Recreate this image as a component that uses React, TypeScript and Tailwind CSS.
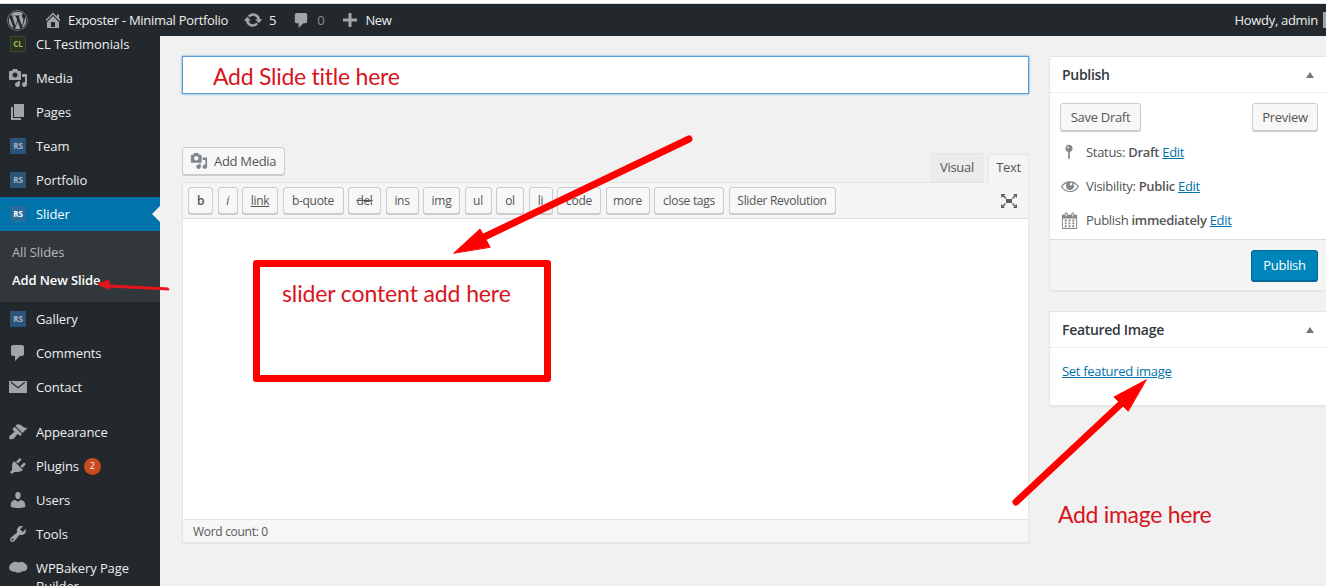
import { ReactNode } from "react";
import { FaWordpress } from "react-icons/fa";

function Dash({ d, className }: { d: string; className?: string }) {
  return (
    <svg viewBox="0 0 20 20" fill="currentColor" className={className ?? "h-5 w-5"}>
      <path d={d} />
    </svg>
  );
}

const icons = {
  media:
    "M13 11V4c0-.55-.45-1-1-1h-1.67L9 1H5L3.67 3H2c-.55 0-1 .45-1 1v7c0 .55.45 1 1 1h10c.55 0 1-.45 1-1zM7 4.5c1.38 0 2.5 1.12 2.5 2.5S8.38 9.5 7 9.5 4.5 8.38 4.5 7 5.62 4.5 7 4.5zM14 6h5v10.5c0 1.38-1.12 2.5-2.5 2.5S14 17.88 14 16.5s1.12-2.5 2.5-2.5c.17 0 .34.02.5.05V9h-3V6zm-4 8.05V13h2v3.5c0 1.38-1.12 2.5-2.5 2.5S7 17.88 7 16.5 8.12 14 9.5 14c.17 0 .34.02.5.05z",
  pages: "M6 15V2h10v13H6zm-1 1h8v2H3V5h2v11z",
  comment: "M5 2h9c1.1 0 2 .9 2 2v7c0 1.1-.9 2-2 2h-2l-5 5v-5H5c-1.1 0-2-.9-2-2V4c0-1.1.9-2 2-2z",
  mail: "M1 4h18v12H1V4zm1.5 1.5L10 11.5l7.5-6-.9-.7L10 10 3.4 4.8l-.9.7z",
  appearance:
    "M14.48 11.06L7.41 3.99l1.5-1.5c.5-.56 2.3-.47 3.51.32 1.21.8 1.43 1.28 2.91 2.1 1.18.64 2.45 1.26 4.45.85zm-.71.71L6.7 4.7 4.93 6.47c-.39.39-.39 1.02 0 1.41l1.06 1.06c.39.39.39 1.03 0 1.42-.6.6-1.43 1.11-2.21 1.69-.35.26-.7.53-1.01.84C1.43 13.23.78 15.08 1.4 17.04c1.95.62 3.8-.03 5.15-1.37.31-.31.58-.66.84-1.01.58-.78 1.09-1.61 1.69-2.21.39-.39 1.02-.39 1.41 0l1.06 1.06c.39.39 1.02.39 1.41 0z",
  plugins:
    "M13.11 4.36L9.87 7.6 8 5.73l3.24-3.24c.35-.34 1.05-.2 1.56.32.52.51.66 1.21.31 1.55zm-8 1.77l.91-1.12 9.01 9.01-1.19.84c-.71.71-2.63 1.16-3.82 1.16H6.14L4.9 17.26c-.59.59-1.54.59-2.12 0-.59-.58-.59-1.53 0-2.12l1.24-1.24v-3.88c0-1.13.4-3.19 1.09-3.89zm7.26 3.97l3.24-3.24c.34-.35 1.04-.21 1.55.31.52.51.66 1.21.31 1.55l-3.24 3.25z",
  users:
    "M10 9.25c-2.27 0-2.73-3.44-2.73-3.44C7 4.02 7.82 2 9.97 2c2.16 0 2.98 2.02 2.71 3.81 0 0-.41 3.44-2.68 3.44zm0 2.57L12.72 10c2.39 0 4.52 2.33 4.52 4.53v2.49s-3.65 1.13-7.24 1.13c-3.65 0-7.24-1.13-7.24-1.13v-2.49c0-2.25 1.94-4.48 4.47-4.48z",
  tools:
    "M16.68 9.77c-1.34 1.34-3.3 1.67-4.95.99l-5.41 6.52c-.99.99-2.59.99-3.58 0s-.99-2.59 0-3.57l6.52-5.42c-.68-1.65-.35-3.61.99-4.95 1.28-1.28 3.12-1.62 4.72-1.06l-2.89 2.89 2.82 2.82 2.86-2.87c.53 1.58.18 3.39-1.08 4.65zM3.81 16.21c.4.39 1.04.39 1.43 0 .4-.4.4-1.04 0-1.43-.39-.4-1.03-.4-1.43 0-.39.39-.39 1.03 0 1.43z",
  cloud:
    "M5 3.5c1.5-1.2 4-1 5.5 0 2-.8 5-.6 6.5 1 2 1 3 3.5 2 5.5-1 1.8-3 2.5-5 2.2-.7 1-2 1.6-3 1.3-1.8.8-2.5.2-3-.8-2 .2-5-.2-6.3-2C.5 8.5 1.5 5 5 3.5z",
  home: "M16 8.5l1.53 1.53-1.06 1.06L10 4.62l-6.47 6.47-1.06-1.06L10 2.5l4 4v-2h2v4zm-6-2.46l6 5.99V18H4v-5.97zM12 17v-5H8v5h4z",
  update:
    "M10.2 3.28c3.53 0 6.43 2.61 6.92 6h2.08l-3.5 4-3.5-4h2.32c-.45-1.97-2.21-3.45-4.32-3.45-1.45 0-2.73.71-3.54 1.78L4.95 5.66C6.23 4.2 8.11 3.28 10.2 3.28zm-.4 13.44c-3.52 0-6.43-2.61-6.92-6H.8l3.5-4c1.17 1.33 2.33 2.67 3.5 4H5.48c.45 1.97 2.21 3.45 4.32 3.45 1.45 0 2.73-.71 3.54-1.78l1.71 1.95c-1.28 1.46-3.15 2.38-5.25 2.38z",
  plus: "M17 8.5v3h-5.5V17h-3v-5.5H3v-3h5.5V3h3v5.5H17z",
  pin: "M14 6c0 1.86-1.28 3.41-3 3.86V16c0 1-2 2-2 2V9.86c-1.72-.45-3-2-3-3.86 0-2.21 1.79-4 4-4s4 1.79 4 4zM8 5c0 .55.45 1 1 1s1-.45 1-1-.45-1-1-1-1 .45-1 1z",
  eye: "M18.3 9.5C15 4.9 8.5 3.8 3.9 7.2c-1.2.9-2.2 2.1-3 3.4.2.4.5.8.8 1.2 3.3 4.6 9.6 5.6 14.2 2.4.9-.7 1.7-1.4 2.4-2.4.3-.4.5-.8.8-1.2-.3-.4-.5-.8-.8-1.1zm-8.2-2.3c.5-.5 1.3-.5 1.8 0s.5 1.3 0 1.8-1.3.5-1.8 0-.5-1.3 0-1.8zm-.1 7.7c-3.1 0-6-1.6-7.7-4.2C3.5 9 5.1 7.8 7 7.2c-.7.8-1 1.7-1 2.7 0 2.2 1.7 4.1 4 4.1 2.2 0 4.1-1.7 4.1-4v-.1c0-1-.4-2-1.1-2.7 1.9.6 3.5 1.8 4.7 3.5-1.7 2.6-4.6 4.2-7.7 4.2z",
  calendar:
    "M15 4h3v15H2V4h3V3c0-.41.15-.76.44-1.06.29-.29.65-.44 1.06-.44s.77.15 1.06.44c.29.3.44.65.44 1.06v1h4V3c0-.41.15-.76.44-1.06.29-.29.65-.44 1.06-.44s.77.15 1.06.44c.29.3.44.65.44 1.06v1zM6 3v2.5c0 .14.05.26.15.36.09.09.21.14.35.14s.26-.05.35-.14c.1-.1.15-.22.15-.36V3c0-.14-.05-.26-.15-.35-.09-.1-.21-.15-.35-.15s-.26.05-.35.15c-.1.09-.15.21-.15.35zm7 0v2.5c0 .14.05.26.14.36.1.09.22.14.36.14s.26-.05.36-.14c.09-.1.14-.22.14-.36V3c0-.14-.05-.26-.14-.35-.1-.1-.22-.15-.36-.15s-.26.05-.36.15c-.09.09-.14.21-.14.35zm4 15V8H3v10h14zM7 9v2H5V9h2zm2 0h2v2H9V9zm4 2V9h2v2h-2zm-6 1v2H5v-2h2zm2 0h2v2H9v-2zm4 2v-2h2v2h-2zm-6 1v2H5v-2h2zm4 2H9v-2h2v2zm4 0h-2v-2h2v2z",
  expand:
    "M7 8h6v4H7zM2 3h4.5L5 4.5 7.5 7 6.5 8 4 5.5 2.5 7 2 3zm16 0v4l-1.5-1.5L14 8l-1-1 2.5-2.5L14 3h4zM2 17v-4l1.5 1.5L6 12l1 1-2.5 2.5L6 17H2zm16 0h-4l1.5-1.5L13 13l1-1 2.5 2.5L18 13v4z",
};

function Badge({ text, className }: { text: string; className: string }) {
  return (
    <span className={`flex h-4 w-4 items-center justify-center text-[8px] font-bold leading-none ${className}`}>{text}</span>
  );
}

function MenuItem({ icon, label, extra, active }: { icon: ReactNode; label: string; extra?: ReactNode; active?: boolean }) {
  return (
    <div className={`relative flex h-[34px] items-center ${active ? "bg-[#0073aa] text-white" : "text-[#eeeeee]"}`}>
      <span className={`flex w-9 shrink-0 items-center justify-center ${active ? "text-white" : "text-[#a0a5aa]"}`}>{icon}</span>
      <span className="pt-px">{label}</span>
      {extra}
      {active && <span className="absolute right-0 top-[9px] h-0 w-0 border-y-8 border-r-8 border-y-transparent border-r-[#f1f1f1]" />}
    </div>
  );
}

function Rs({ active }: { active?: boolean }) {
  return <Badge text="RS" className={active ? "bg-[#2a6c9e] text-white" : "bg-[#2c5378] text-[#a8b4c0]"} />;
}

function Sidebar() {
  return (
    <aside className="h-[550px] w-40 shrink-0 overflow-hidden bg-[#23282d] text-[13px] tracking-[-0.1px]">
      <div className="-mt-[9px]">
        <MenuItem icon={<Badge text="CL" className="border border-[#3a4a2a] bg-[#2a3226] text-[#9dbb4f]" />} label="CL Testimonials" />
        <MenuItem icon={<Dash d={icons.media} />} label="Media" />
        <MenuItem icon={<Dash d={icons.pages} />} label="Pages" />
        <MenuItem icon={<Rs />} label="Team" />
        <MenuItem icon={<Rs />} label="Portfolio" />
        <MenuItem icon={<Rs active />} label="Slider" active />
        <div className="flex h-[71px] flex-col gap-2 bg-[#32373c] pl-3 pt-[11px] leading-5">
          <span className="text-[#b4b9be]">All Slides</span>
          <span className="font-semibold text-white">Add New Slide</span>
        </div>
        <MenuItem icon={<Rs />} label="Gallery" />
        <MenuItem icon={<Dash d={icons.comment} />} label="Comments" />
        <MenuItem icon={<Dash d={icons.mail} />} label="Contact" />
        <div className="h-[11px]" />
        <MenuItem icon={<Dash d={icons.appearance} />} label="Appearance" />
        <MenuItem
          icon={<Dash d={icons.plugins} />}
          label="Plugins"
          extra={
            <span className="ml-[5px] flex h-[17px] w-[17px] items-center justify-center rounded-full bg-[#ca4a1f] text-[9px] text-white">2</span>
          }
        />
        <MenuItem icon={<Dash d={icons.users} />} label="Users" />
        <MenuItem icon={<Dash d={icons.tools} />} label="Tools" />
        <div className="flex pt-2 leading-[18px] text-[#eeeeee]">
          <span className="flex w-9 shrink-0 justify-center text-[#a0a5aa]">
            <Dash d={icons.cloud} />
          </span>
          <span className="w-[110px]">WPBakery Page Builder</span>
        </div>
      </div>
    </aside>
  );
}

function AdminBar() {
  return (
    <header className="flex h-8 items-center justify-between bg-[#23282d] text-[13px] text-[#eeeeee]">
      <div className="flex items-center">
        <FaWordpress className="ml-[7px] h-[21px] w-[21px] text-[#a0a5aa]" />
        <Dash d={icons.home} className="ml-[15px] h-5 w-5 text-[#a0a5aa]" />
        <span className="ml-[5px] pt-px">Exposter - Minimal Portfolio</span>
        <Dash d={icons.update} className="ml-[15px] h-5 w-5 text-[#a0a5aa]" />
        <span className="ml-[6px] pt-px">5</span>
        <Dash d={icons.comment} className="ml-4 h-[19px] w-[19px] text-[#a0a5aa]" />
        <span className="ml-[6px] pt-px text-[#8a8f94]">0</span>
        <Dash d={icons.plus} className="ml-4 h-[20px] w-[20px] text-[#a0a5aa]" />
        <span className="ml-[5px] pt-px">New</span>
      </div>
      <div className="flex items-center">
        <span className="pt-px">Howdy, admin</span>
        <span className="ml-[5px] h-4 w-[3px] bg-[#a0a5aa]" />
      </div>
    </header>
  );
}

const quicktags = [
  { label: "b", cls: "w-[25px] font-semibold" },
  { label: "i", cls: "w-[20px] italic" },
  { label: "link", cls: "w-[36px] underline" },
  { label: "b-quote", cls: "w-[61px]" },
  { label: "del", cls: "w-[33px] line-through" },
  { label: "ins", cls: "w-[33px]" },
  { label: "img", cls: "w-[37px]" },
  { label: "ul", cls: "w-[27px]" },
  { label: "ol", cls: "w-[28px]" },
  { label: "li", cls: "w-[24px]" },
  { label: "code", cls: "w-[44px]" },
  { label: "more", cls: "w-[44px]" },
  { label: "close tags", cls: "w-[70px]" },
  { label: "Slider Revolution", cls: "w-[107px]" },
];

function Editor() {
  return (
    <section className="mt-[53px]">
      <div className="flex h-[35px] items-start justify-between">
        <button className="flex h-[28px] w-[103px] items-center gap-[3px] rounded-[3px] border border-[#cccccc] bg-[#f7f7f7] pl-[7px] text-[13px] text-[#555555] shadow-[0_1px_0_#cccccc]">
          <Dash d={icons.media} className="h-[18px] w-[18px] text-[#82878c]" />
          <span className="ml-[3px] pt-px">Add Media</span>
        </button>
        <div className="mt-[6px] flex h-[29px] gap-[5px] text-[13px] text-[#555555]">
          <span className="flex w-[52px] items-center justify-center border border-b-0 border-[#e5e5e5] bg-[#ebebeb]">Visual</span>
          <span className="relative top-px flex w-[41px] items-center justify-center border border-b-0 border-[#e5e5e5] bg-[#f5f5f5] pb-[3px]">Text</span>
        </div>
      </div>
      <div className="border border-[#e5e5e5] bg-white shadow-[0_1px_1px_rgba(0,0,0,0.04)]">
        <div className="flex h-9 items-center justify-between border-b border-[#dddddd] bg-[#f5f5f5] pl-[5px] pr-[9px]">
          <div className="flex gap-[4.5px]">
            {quicktags.map((t) => (
              <span
                key={t.label}
                className={`flex h-[27px] items-center justify-center rounded-[3px] border border-[#cccccc] bg-[#f7f7f7] text-[12px] text-[#555555] shadow-[0_1px_0_#cccccc] ${t.cls}`}
              >
                {t.label}
              </span>
            ))}
          </div>
          <Dash d={icons.expand} className="h-5 w-5 text-[#555d66]" />
        </div>
        <div className="h-[300px] bg-white" />
        <div className="flex h-[23px] items-center border-t border-[#e5e5e5] bg-[#f7f7f7] pl-[10px] pt-px text-[12px] text-[#555555]">Word count: 0</div>
      </div>
    </section>
  );
}

function BoxHeader({ title }: { title: string }) {
  return (
    <div className="flex h-9 items-center justify-between border-b border-[#eeeeee] pl-3 pr-[12px]">
      <h2 className="text-[14px] font-semibold text-[#32373c]">{title}</h2>
      <span className="h-0 w-0 border-x-[4px] border-b-[6px] border-x-transparent border-b-[#72777c]" />
    </div>
  );
}

function PubRow({ icon, children }: { icon: ReactNode; children: ReactNode }) {
  return (
    <div className="flex h-[34px] items-center text-[#555555]">
      <span className="flex w-[26px] shrink-0 justify-start text-[#82878c]">{icon}</span>
      <span className="pt-px">{children}</span>
    </div>
  );
}

function Edit() {
  return <a className="text-[#0073aa] underline">Edit</a>;
}

function SideColumn() {
  return (
    <aside className="ml-5 w-[278px] shrink-0 pt-5 text-[13px]">
      <div className="border border-[#e5e5e5] bg-white shadow-[0_1px_1px_rgba(0,0,0,0.04)]">
        <BoxHeader title="Publish" />
        <div className="pl-[10px] pr-[8px] pt-[10px]">
          <div className="flex justify-between">
            <span className="flex h-[28px] w-[81px] items-center justify-center rounded-[3px] border border-[#cccccc] bg-[#f7f7f7] pt-px text-[#555555] shadow-[0_1px_0_#cccccc]">Save Draft</span>
            <span className="flex h-[28px] w-[66px] items-center justify-center rounded-[3px] border border-[#cccccc] bg-[#f7f7f7] pt-px text-[#555555] shadow-[0_1px_0_#cccccc]">Preview</span>
          </div>
          <div className="mt-[4px]">
            <PubRow icon={<Dash d={icons.pin} className="h-[18px] w-[18px]" />}>
              Status: <b className="font-semibold">Draft</b> <Edit />
            </PubRow>
            <PubRow icon={<Dash d={icons.eye} className="h-[20px] w-[20px]" />}>
              Visibility: <b className="font-semibold">Public</b> <Edit />
            </PubRow>
            <PubRow icon={<Dash d={icons.calendar} className="h-[19px] w-[19px]" />}>
              Publish <b className="font-semibold">immediately</b> <Edit />
            </PubRow>
          </div>
        </div>
        <div className="mt-[2px] flex h-[51px] items-center justify-end border-t border-[#dddddd] bg-[#f5f5f5] pr-[8px]">
          <span className="flex h-[31px] w-[67px] items-center justify-center rounded-[3px] border border-[#006799] bg-[#0085ba] pt-px text-white shadow-[0_1px_0_#006799]">Publish</span>
        </div>
      </div>
      <div className="mt-5 h-[95px] border border-[#e5e5e5] bg-white shadow-[0_1px_1px_rgba(0,0,0,0.04)]">
        <BoxHeader title="Featured Image" />
        <div className="pl-3 pt-[14px]">
          <a className="text-[#0073aa] underline">Set featured image</a>
        </div>
      </div>
    </aside>
  );
}

function Annotations() {
  return (
    <>
      <svg className="pointer-events-none absolute left-0 top-0" width="1326" height="586" viewBox="0 0 1326 586">
        <g fill="#ff0000" stroke="#ff0000" strokeLinecap="round" strokeLinejoin="round">
          <line x1="689" y1="139" x2="478" y2="240" strokeWidth="7" />
          <polygon points="454,253 480,229 490,247" strokeWidth="1" />
          <polygon points="109,285 168,288 169,290 109,287" strokeWidth="1" fill="#e8141c" stroke="#e8141c" />
          <polygon points="98,284 109,280 109,289" strokeWidth="1" fill="#e8141c" stroke="#e8141c" />
          <line x1="1016" y1="502" x2="1124" y2="401" strokeWidth="7" />
          <polygon points="1146,380 1114,397 1128,411" strokeWidth="1" />
        </g>
      </svg>
      <div className="absolute left-[253px] top-[260px] h-[122px] w-[298px] rounded-[3px] border-[7px] border-[#ff0000]" />
      <span className="absolute left-[213px] top-[62px] font-['Lato',sans-serif] text-[23px] leading-7 tracking-[-0.25px] text-[#d8141c]">Add Slide title here</span>
      <span className="absolute left-[282px] top-[279px] font-['Lato',sans-serif] text-[23px] leading-7 tracking-[-0.12px] text-[#d8141c]">slider content add here</span>
      <span className="absolute left-[1058px] top-[500px] font-['Lato',sans-serif] text-[23px] leading-7 tracking-[-0.3px] text-[#d8141c]">Add image here</span>
    </>
  );
}

export default function App() {
  return (
    <div className="relative h-[586px] w-[1326px] overflow-hidden bg-[#f1f1f1] font-['Open_Sans',sans-serif] tracking-[-0.3px]">
      <div className="h-1 border-b border-[#dddddd] bg-white" />
      <AdminBar />
      <div className="flex">
        <Sidebar />
        <main className="flex flex-1 pl-[22px]">
          <div className="w-[847px] shrink-0 pt-5">
            <div className="h-[38px] border border-[#5b9dd9] bg-white shadow-[0_0_2px_rgba(30,140,190,0.8)]" />
            <Editor />
          </div>
          <SideColumn />
        </main>
      </div>
      <Annotations />
    </div>
  );
}
